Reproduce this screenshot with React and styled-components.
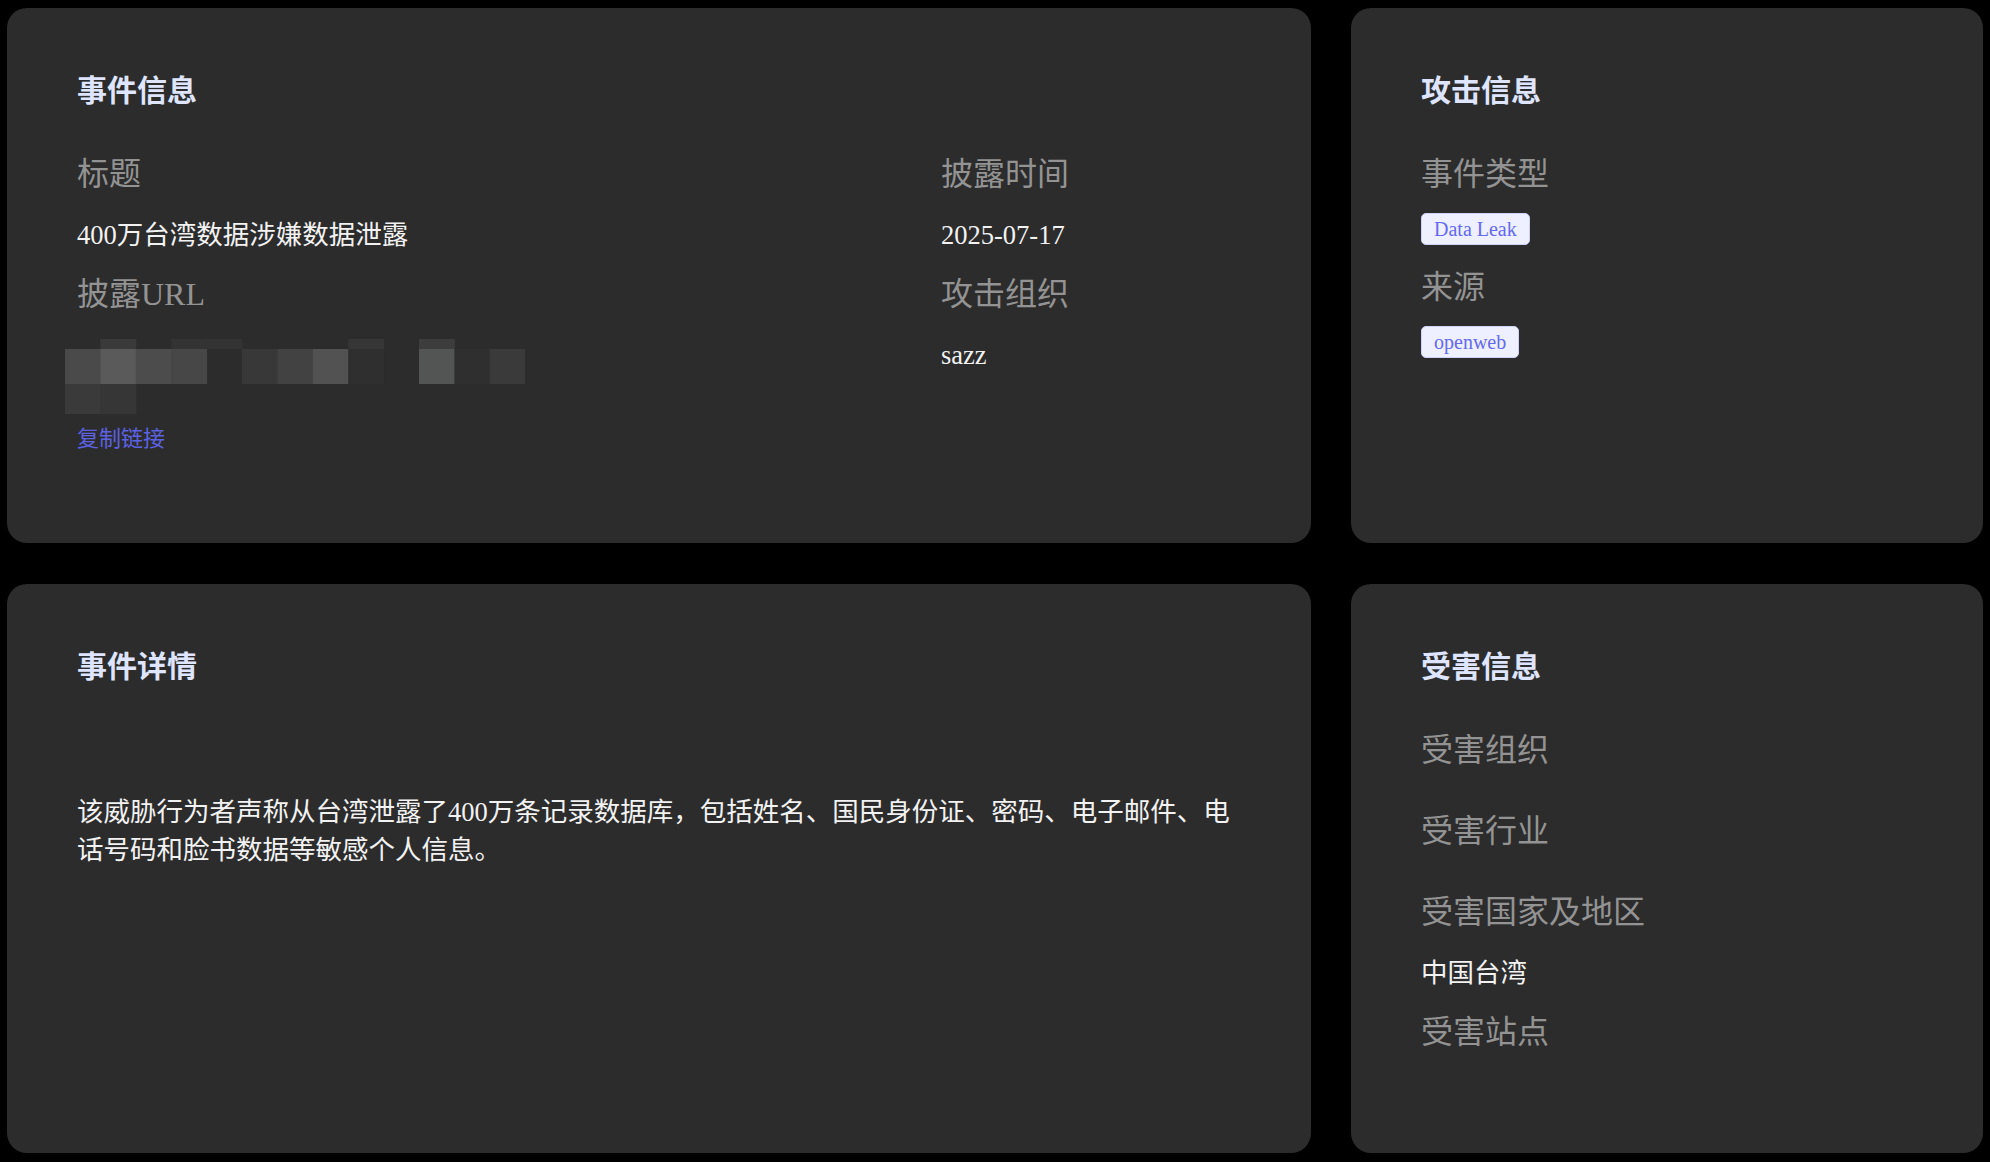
import React from 'react'
import styled, { createGlobalStyle } from 'styled-components'

const GlobalStyle = createGlobalStyle`
body {
  margin: 0;
  background-color: #000;
  font-family: "Liberation Serif", "Noto Sans CJK SC", serif;
}
`

const Page = styled.div`
display: grid;
grid-template-columns: 1304fr 632fr;
column-gap: 40px;
row-gap: 41px;
padding: 8px 7px;
`
const Card = styled.div`
background-color: #2c2c2c;
border-radius: 20px;
padding: 60px 70px;
min-height: ${p => p.$minHeight || 0}px;
box-sizing: border-box;
`
const Heading = styled.h2`
margin: 0;
font-size: 30px;
line-height: 46px;
font-weight: 600;
color: #dfe5ff;
`
const Fields = styled.div`
display: grid;
grid-template-columns: ${p => p.$cols || '1fr'};
margin-top: 36px;
`
const FieldBox = styled.div`
display: flex;
flex-direction: column;
align-items: flex-start;
`
const Label = styled.div`
font-size: 32px;
line-height: 48px;
color: #939393;
`
const Value = styled.div`
margin: 18px 0 15px;
font-size: 26.5px;
line-height: 39px;
color: #f2f2f2;
`
const Mosaic = styled.svg`
display: block;
margin: 3px 0 0 -12px;
`
const CopyLink = styled.a`
display: block;
margin-top: 8px;
font-size: 22px;
line-height: 33px;
color: #5c62e2;
cursor: pointer;
`
const TagRow = styled.div`
display: flex;
gap: 8px;
margin: 15px 0 18px;
`
const Tag = styled.span`
display: inline-block;
height: 32px;
box-sizing: border-box;
padding: 0 12px;
font-size: 20px;
line-height: 30px;
color: #6569ee;
background-color: #eef0ff;
border: 1px solid #cfd3f7;
border-radius: 5px;
`
const Paragraph = styled.p`
margin: 103px 0 0;
font-size: 26.5px;
line-height: 38px;
color: #f2f2f2;
`

// pixelated (redacted) URL
const blockW = 35.4
const rows = [
  { y: 0, h: 10, cells: [null, '#3a3a3a', null, '#333333', '#333333', null, null, null, '#363636', null, '#3d3d3d', null, null] },
  { y: 10, h: 35, cells: ['#4a4a4a', '#5a5a5a', '#4c4c4c', '#474747', null, '#383838', '#424242', '#525252', '#2f2f2f', null, '#535555', '#2f2f2f', '#3a3a3a'] },
  { y: 45, h: 30, cells: ['#3a3a3a', '#363636'] },
]

function BlurredUrl() {
  return (
    <Mosaic width="460" height="75" viewBox="0 0 460 75">
      {rows.map((r, ri) =>
        r.cells.map((c, ci) =>
          c ? <rect key={ri + '-' + ci} x={ci * blockW} y={r.y} width={blockW + 0.5} height={r.h} fill={c} /> : null
        )
      )}
    </Mosaic>
  )
}

function Field({ label, children }) {
  return (
    <FieldBox>
      <Label>{label}</Label>
      <Value>{children}</Value>
    </FieldBox>
  )
}

function App() {
  return (
    <>
      <GlobalStyle />
      <Page>
        <Card $minHeight={535}>
          <Heading>事件信息</Heading>
          <Fields $cols="1fr 300px">
            <Field label="标题">400万台湾数据涉嫌数据泄露</Field>
            <Field label="披露时间">2025-07-17</Field>
            <Field label="披露URL">
              <BlurredUrl />
              <CopyLink>复制链接</CopyLink>
            </Field>
            <Field label="攻击组织">sazz</Field>
          </Fields>
        </Card>

        <Card>
          <Heading>攻击信息</Heading>
          <Fields>
            <FieldBox>
              <Label>事件类型</Label>
              <TagRow><Tag>Data Leak</Tag></TagRow>
            </FieldBox>
            <FieldBox>
              <Label>来源</Label>
              <TagRow><Tag>openweb</Tag></TagRow>
            </FieldBox>
          </Fields>
        </Card>

        <Card $minHeight={569}>
          <Heading>事件详情</Heading>
          <Paragraph>
            该威胁行为者声称从台湾泄露了400万条记录数据库，包括姓名、国民身份证、密码、电子邮件、电话号码和脸书数据等敏感个人信息。
          </Paragraph>
        </Card>

        <Card>
          <Heading>受害信息</Heading>
          <Fields>
            <Field label="受害组织" />
            <Field label="受害行业" />
            <Field label="受害国家及地区">中国台湾</Field>
            <Field label="受害站点" />
          </Fields>
        </Card>
      </Page>
    </>
  )
}

export default App
